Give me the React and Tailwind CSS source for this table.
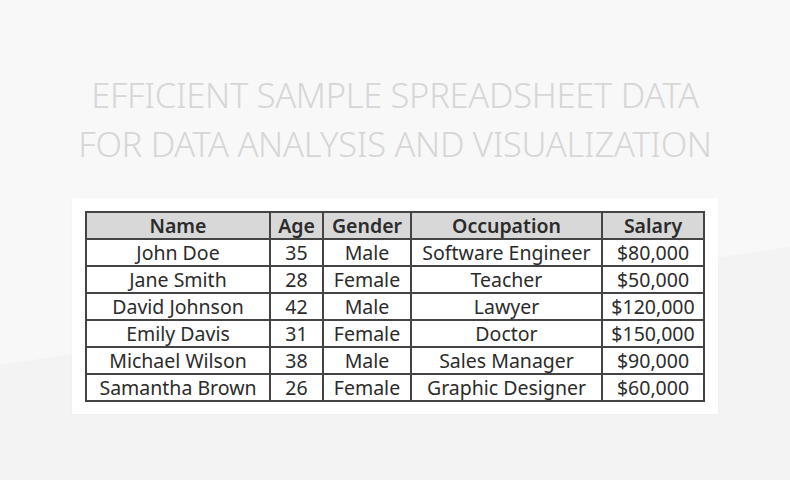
import React from 'react'

const ROWS = [
    ['John Doe', '35', 'Male', 'Software Engineer', '$80,000'],
    ['Jane Smith', '28', 'Female', 'Teacher', '$50,000'],
    ['David Johnson', '42', 'Male', 'Lawyer', '$120,000'],
    ['Emily Davis', '31', 'Female', 'Doctor', '$150,000'],
    ['Michael Wilson', '38', 'Male', 'Sales Manager', '$90,000'],
    ['Samantha Brown', '26', 'Female', 'Graphic Designer', '$60,000'],
]

const HEADERS = ['Name', 'Age', 'Gender', 'Occupation', 'Salary']
const WIDTHS = ['w-[184px]', 'w-[53px]', 'w-[88px]', 'w-[191px]', 'w-[102px]']

const App = () => {
    return (
        <div
            className="w-[790px] h-[480px] overflow-hidden flex flex-col items-center bg-[linear-gradient(171.5deg,#f8f8f8_61%,#f3f3f3_61%)]"
            style={{ fontFamily: '"Noto Sans", "Open Sans", sans-serif' }}
        >
            {/* Title */}
            <h1 className="mt-[70px] text-center text-[34.5px] leading-[49px] font-light text-[#d6d6d6] tracking-[-0.3px]">
                EFFICIENT SAMPLE SPREADSHEET DATA
                <br />
                FOR DATA ANALYSIS AND VISUALIZATION
            </h1>

            {/* Card */}
            <div className="mt-[30px] bg-white p-[13px] pb-[12px] shadow-[0_0_2px_rgba(0,0,0,0.04)]">
                <table className="border-collapse border-2 border-[#444] text-[#2b2b2b] text-[19.5px]">
                    <thead>
                        <tr className="bg-[#d8d8d8]">
                            {HEADERS.map((h, i) => (
                                <th key={i} className={`${WIDTHS[i]} h-[27px] p-0 pt-[1px] leading-none border-2 border-[#444] font-semibold text-center`}>
                                    {h}
                                </th>
                            ))}
                        </tr>
                    </thead>
                    <tbody>
                        {ROWS.map((r, ri) => (
                            <tr key={ri}>
                                {r.map((c, ci) => (
                                    <td key={ci} className="h-[27px] p-0 pt-[1px] leading-none border-2 border-[#444] text-center whitespace-nowrap">
                                        {c}
                                    </td>
                                ))}
                            </tr>
                        ))}
                    </tbody>
                </table>
            </div>
        </div>
    )
}

export default App
